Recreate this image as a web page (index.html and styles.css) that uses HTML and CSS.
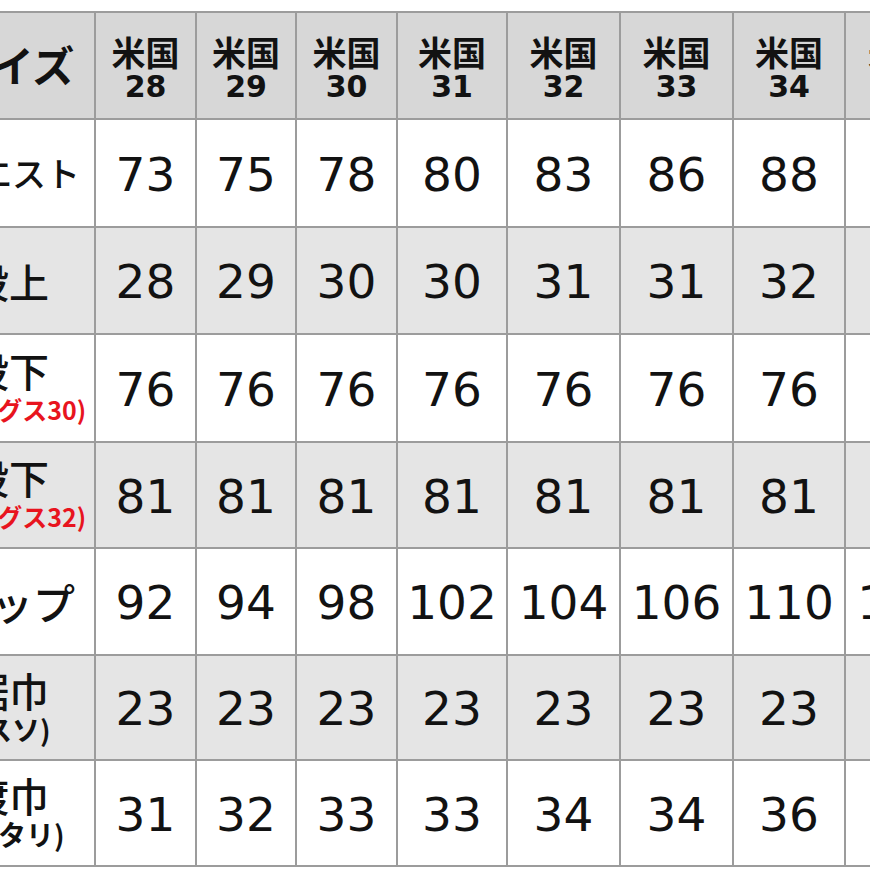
FILE: index.html
```html
<!DOCTYPE html>
<html lang="ja">
<head>
<meta charset="utf-8">
<title>サイズ表</title>
<link rel="stylesheet" href="styles.css">
</head>
<body>
<div class="viewport">
  <div class="chart">
    <div class="row head">
      <div class="cell label"><span class="lab-head">サイズ</span></div>
      <div class="cell hcell"><span class="us">米国</span><span class="usn">28</span></div>
      <div class="cell hcell"><span class="us">米国</span><span class="usn">29</span></div>
      <div class="cell hcell"><span class="us">米国</span><span class="usn">30</span></div>
      <div class="cell hcell"><span class="us">米国</span><span class="usn">31</span></div>
      <div class="cell hcell"><span class="us">米国</span><span class="usn">32</span></div>
      <div class="cell hcell"><span class="us">米国</span><span class="usn">33</span></div>
      <div class="cell hcell"><span class="us">米国</span><span class="usn">34</span></div>
      <div class="cell hcell"><span class="us">米国</span><span class="usn">36</span></div>
    </div>
    <div class="row">
      <div class="cell label"><span class="lab-4">ウエスト</span></div>
      <div class="cell num">73</div><div class="cell num">75</div><div class="cell num">78</div><div class="cell num">80</div>
      <div class="cell num">83</div><div class="cell num">86</div><div class="cell num">88</div><div class="cell num">91</div>
    </div>
    <div class="row alt">
      <div class="cell label"><span class="lab-2">股上</span></div>
      <div class="cell num">28</div><div class="cell num">29</div><div class="cell num">30</div><div class="cell num">30</div>
      <div class="cell num">31</div><div class="cell num">31</div><div class="cell num">32</div><div class="cell num">33</div>
    </div>
    <div class="row">
      <div class="cell label"><span class="lab-2 two">股下</span><span class="sub red">(レングス30)</span></div>
      <div class="cell num">76</div><div class="cell num">76</div><div class="cell num">76</div><div class="cell num">76</div>
      <div class="cell num">76</div><div class="cell num">76</div><div class="cell num">76</div><div class="cell num">76</div>
    </div>
    <div class="row alt">
      <div class="cell label"><span class="lab-2 two">股下</span><span class="sub red">(レングス32)</span></div>
      <div class="cell num">81</div><div class="cell num">81</div><div class="cell num">81</div><div class="cell num">81</div>
      <div class="cell num">81</div><div class="cell num">81</div><div class="cell num">81</div><div class="cell num">81</div>
    </div>
    <div class="row">
      <div class="cell label"><span class="lab-3">ヒップ</span></div>
      <div class="cell num">92</div><div class="cell num">94</div><div class="cell num">98</div><div class="cell num">102</div>
      <div class="cell num">104</div><div class="cell num">106</div><div class="cell num">110</div><div class="cell num">114</div>
    </div>
    <div class="row alt">
      <div class="cell label"><span class="lab-2 two">裾巾</span><span class="sub">(スソ)</span></div>
      <div class="cell num">23</div><div class="cell num">23</div><div class="cell num">23</div><div class="cell num">23</div>
      <div class="cell num">23</div><div class="cell num">23</div><div class="cell num">23</div><div class="cell num">24</div>
    </div>
    <div class="row">
      <div class="cell label"><span class="lab-2 two">渡巾</span><span class="sub">(ワタリ)</span></div>
      <div class="cell num">31</div><div class="cell num">32</div><div class="cell num">33</div><div class="cell num">33</div>
      <div class="cell num">34</div><div class="cell num">34</div><div class="cell num">36</div><div class="cell num">37</div>
    </div>
  </div>
</div>
</body>
</html>
```

FILE: styles.css
```css
html, body {
  margin: 0;
  padding: 0;
  background: #ffffff;
}

.viewport {
  width: 870px;
  height: 870px;
  overflow: hidden;
  padding-top: 11px;
  box-sizing: border-box;
  background: #ffffff;
}

.chart {
  display: grid;
  width: 1028px;
  margin-left: -70px;
  grid-template-columns: 164px 99px 98px 99px 108px 111px 111px 110px 112px;
  grid-template-rows: 105px 106px 105px 106px 104px 105px 103px 104px;
  gap: 2px;
  padding: 2px 0;
  background: #9c9c9c;
  font-family: "Noto Sans CJK JP", "DejaVu Sans", sans-serif;
  color: #121212;
}

.row {
  display: contents;
}

.cell {
  background: #ffffff;
  display: flex;
  flex-direction: column;
  align-items: center;
  justify-content: center;
  overflow: hidden;
  white-space: nowrap;
}

.row.alt .cell {
  background: #e5e5e5;
}

.row.head .cell {
  background: #d7d7d7;
}

.hcell {
  padding-top: 6px;
  box-sizing: border-box;
}

.num {
  font-family: "DejaVu Sans", sans-serif;
  font-size: 47px;
  line-height: 1;
  padding-top: 2px;
}

.us {
  font-family: "Noto Sans CJK JP", sans-serif;
  font-weight: 700;
  font-size: 34px;
  line-height: 32px;
}

.usn {
  font-family: "DejaVu Sans", sans-serif;
  font-weight: 700;
  font-size: 30px;
  line-height: 30px;
  margin-top: 4px;
}

.label {
  font-family: "Noto Sans CJK JP", sans-serif;
  font-weight: 500;
}

.lab-head {
  font-size: 42px;
  font-weight: 700;
  line-height: 1;
  margin-top: -4px;
}

.lab-4 {
  font-size: 34px;
  line-height: 1;
}

.lab-3 {
  font-size: 42px;
  line-height: 1;
}

.lab-2 {
  font-size: 40px;
  line-height: 1;
  margin-right: 6px;
}

.lab-2.two {
  line-height: 44px;
  margin-top: -2px;
}

.sub {
  font-size: 28px;
  line-height: 34px;
  font-weight: 700;
}

.sub.red {
  color: #e8141e;
  font-size: 25px;
}
```
